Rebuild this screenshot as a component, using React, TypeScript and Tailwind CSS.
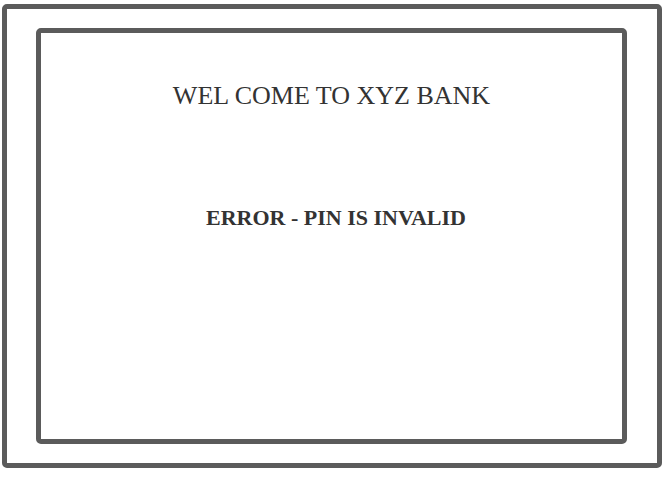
import React from 'react';

const App: React.FC = () => {
    return (
        <div className="w-[670px] h-[477px] bg-white pl-[2px] pt-[4px]" style={{ fontFamily: '"Liberation Serif", serif' }}>
            <div className="w-[660px] h-[464px] border-[5px] border-[#5b5b5b] rounded-[5px] pl-[29px] pt-[19px]">
                <div className="w-[591px] h-[416px] border-[5px] border-[#5b5b5b] rounded-[5px] flex flex-col items-center">
                    <h1 className="mt-[48px] text-[26px] leading-[30px] text-[#333333]">WEL COME TO XYZ BANK</h1>
                    <p className="mt-[94px] ml-[9px] text-[22px] leading-[26px] font-bold text-[#333333]">ERROR - PIN IS INVALID</p>
                </div>
            </div>
        </div>
    );
};

export default App;
